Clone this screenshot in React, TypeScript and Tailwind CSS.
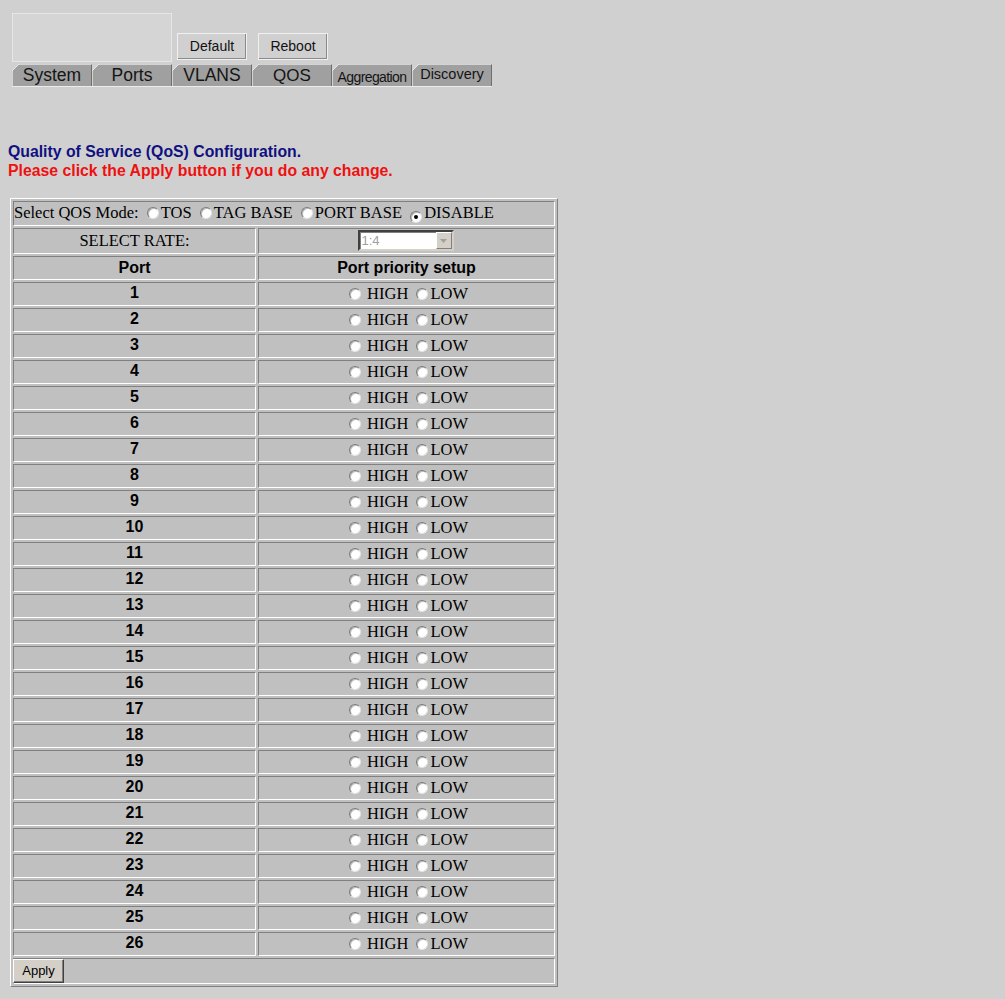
import React from "react";

const ports = Array.from({ length: 26 }, (_, i) => i + 1);

const tabs = [
    { label: "System", cls: "text-[17.5px]" },
    { label: "Ports", cls: "text-[17.5px]" },
    { label: "VLANS", cls: "text-[17.5px]" },
    { label: "QOS", cls: "text-[17px]" },
    { label: "Aggregation", cls: "text-[14px] tracking-[-0.6px] pt-[2px]" },
    { label: "Discovery", cls: "text-[14.5px] pb-[2px]" },
];

function Radio({ checked }: { checked?: boolean }) {
    return (
        <span className="inline-flex items-center justify-center w-[12px] h-[12px] rounded-full bg-white border border-t-[#7a7a7a] border-l-[#7a7a7a] border-r-[#e4e4e4] border-b-[#e4e4e4] shadow-[inset_1px_1px_0_#b8b8b8] ml-[4px] mr-[2px] align-[-1px]">
            {checked && <span className="w-[4px] h-[4px] rounded-full bg-black" />}
        </span>
    );
}

const cell = "p-0 border border-t-[#808080] border-l-[#808080] border-r-white border-b-white";
const serif = "font-['Liberation_Serif','Times_New_Roman',serif] text-[16.5px]";

export default function App() {
    return (
        <div className="min-h-screen bg-[#d0d0d0] pl-[8px] pt-[13px] font-['Liberation_Sans',Arial,sans-serif] text-black">
            {/* header: logo, buttons, tabs */}
            <div className="pl-[4px]">
                <div className="flex items-end">
                    <div className="w-[160px] h-[49px] bg-[#d5d5d5] border border-[#e6e6e6]" />
                    <button className="ml-[5px] mb-[2px] w-[70px] h-[27px] bg-[#d0d0d0] border border-[#f0f0f0] shadow-[inset_-1px_-1px_0_#8a8a8a] text-[14px] text-[#111]">
                        Default
                    </button>
                    <button className="ml-[11px] mb-[2px] w-[70px] h-[27px] bg-[#d0d0d0] border border-[#f0f0f0] shadow-[inset_-1px_-1px_0_#8a8a8a] text-[14px] text-[#111]">
                        Reboot
                    </button>
                </div>
                <div className="mt-[2px] inline-flex border-b border-[#ececec]">
                    {tabs.map((t) => (
                        <div
                            key={t.label}
                            className={`relative w-[80px] h-[22px] bg-[#a0a0a0] border-t border-l border-[#d4d4d4] border-r border-r-[#6e6e6e] flex items-center justify-center leading-none text-[#141414] ${t.cls}`}
                        >
                            <svg className="absolute -top-[1px] -left-[1px]" width="7" height="7" viewBox="0 0 7 7">
                                <polygon points="0,0 7,0 0,7" fill="#d0d0d0" />
                                <line x1="0" y1="7" x2="7" y2="0" stroke="#e8e8e8" strokeWidth="1" />
                            </svg>
                            {t.label}
                        </div>
                    ))}
                </div>
            </div>

            {/* messages */}
            <div className="mt-[54px] text-[15.8px] font-bold leading-[19px]">
                <p className="text-[#101080]">Quality of Service (QoS) Configuration.</p>
                <p className="text-[#f01010]">Please click the Apply button if you do any change.</p>
            </div>

            {/* QoS table */}
            <table className="mt-[18px] ml-[2px] w-[548px] bg-[#c0c0c0] border-separate border-spacing-[2px] border border-t-white border-l-white border-r-[#808080] border-b-[#808080]">
                <tbody>
                    <tr>
                        <td colSpan={2} className={`${cell} h-[25px] ${serif} leading-[20px] whitespace-nowrap`}>
                            Select QOS Mode: <Radio />TOS <Radio />TAG BASE <Radio />PORT BASE <Radio checked />DISABLE
                        </td>
                    </tr>
                    <tr>
                        <td className={`${cell} w-[243px] h-[26px] text-center ${serif} leading-[20px]`}>
                            SELECT RATE:
                        </td>
                        <td className={`${cell} h-[26px]`}>
                            <div className="flex justify-center pr-[2px]">
                                <div className="flex w-[96px] h-[21px] bg-white border-2 border-t-[#404040] border-l-[#404040] border-r-[#d4d0c8] border-b-[#d4d0c8] shadow-[inset_1px_1px_0_#808080]">
                                    <span className="flex-1 pl-[2px] text-[13px] leading-[17px] text-[#a0a0a0]">1:4</span>
                                    <span className="w-[16px] h-[17px] bg-[#d4d0c8] border border-t-white border-l-white border-r-[#808080] border-b-[#808080] flex items-center justify-center">
                                        <svg width="7" height="4" viewBox="0 0 7 4">
                                            <polygon points="0,0 7,0 3.5,4" fill="#a0a0a0" />
                                        </svg>
                                    </span>
                                </div>
                            </div>
                        </td>
                    </tr>
                    <tr>
                        <td className={`${cell} h-[24px] text-center text-[16px] font-bold leading-[18px]`}>Port</td>
                        <td className={`${cell} h-[24px] text-center text-[16px] font-bold leading-[18px]`}>Port priority setup</td>
                    </tr>
                    {ports.map((p) => (
                        <tr key={p}>
                            <td className={`${cell} h-[24px] text-center text-[16px] font-bold leading-[18px] pb-[2px]`}>{p}</td>
                            <td className={`${cell} h-[24px] text-center ${serif} leading-[18px] whitespace-nowrap`}>
                                <Radio /> HIGH <Radio />LOW
                            </td>
                        </tr>
                    ))}
                    <tr>
                        <td colSpan={2} className={`${cell} h-[26px]`}>
                            <button className="-ml-[1px] flex items-center justify-center w-[51px] h-[24px] bg-[#d4d0c8] border border-t-white border-l-white border-r-[#404040] border-b-[#404040] shadow-[inset_-1px_-1px_0_#808080] text-[13px]">
                                Apply
                            </button>
                        </td>
                    </tr>
                </tbody>
            </table>
        </div>
    );
}
